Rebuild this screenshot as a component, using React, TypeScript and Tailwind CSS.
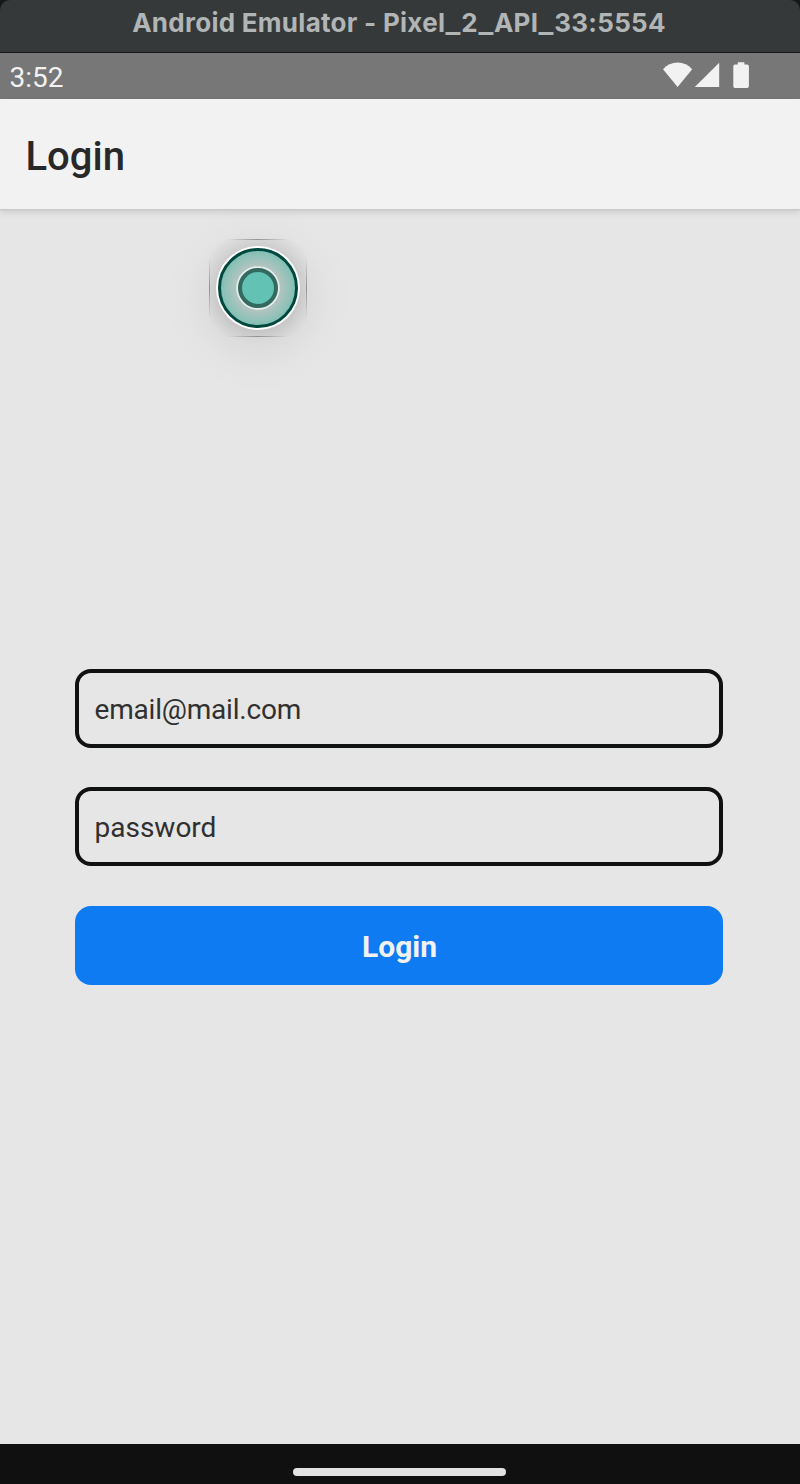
import React, { useState } from "react";

function Underscore() {
  return <span className="inline-block w-[16px] scale-x-[1.2] text-center tracking-normal">_</span>;
}

function TitleBar() {
  return (
    <div className="h-[53px] shrink-0 bg-[#171819]">
      <div className="flex h-[52px] justify-center rounded-t-[10px] bg-[#353939]">
        <h1 className="whitespace-nowrap pt-[6px] pr-[2px] font-['Inter',sans-serif] text-[26px] leading-[34px] font-bold tracking-[0.27px] text-[#b1b5b6]">
          Android Emulator - Pixel<Underscore />2<Underscore />API<Underscore />33:5554
        </h1>
      </div>
    </div>
  );
}

function StatusBar() {
  return (
    <div className="flex h-[46px] shrink-0 items-start justify-between bg-[#777777] pr-[51px] pl-[9.5px] text-[#f2f2f2]">
      <span className="pt-[6.5px] text-[28px] leading-[36px]">3:52</span>
      <svg className="mt-[8px]" width="86" height="28" viewBox="0 0 86 28" fill="currentColor">
        <path d="M0 8.2C4 3.7 9 1.4 14.6 1.4S25.200 3.700 29.200 8.200L14.600 26Z" />
        <path d="M56.200 1.700V26H31.800Z" />
        <path d="M74.800 1.200h6.600v2.300h2.800q1.700 0 1.700 1.700v20q0 1.700-1.700 1.700h-12.200q-1.700 0-1.700-1.700v-20q0-1.700 1.700-1.700h2.800z" />
      </svg>
    </div>
  );
}

function TouchPointer() {
  return (
    <svg className="pointer-events-none absolute top-[-39px] left-[138px]" width="240" height="240" viewBox="0 0 240 240">
      <defs>
        <radialGradient id="shadow" gradientUnits="userSpaceOnUse" cx="120" cy="129" r="96">
          <stop offset="0.3" stopColor="#000" stopOpacity="0.08" />
          <stop offset="0.5" stopColor="#000" stopOpacity="0.04" />
          <stop offset="0.75" stopColor="#000" stopOpacity="0.01" />
          <stop offset="1" stopColor="#000" stopOpacity="0" />
        </radialGradient>
        <radialGradient id="halo" gradientUnits="userSpaceOnUse" cx="120" cy="118" r="60">
          <stop offset="0.68" stopColor="#000" stopOpacity="0.08" />
          <stop offset="1" stopColor="#000" stopOpacity="0" />
        </radialGradient>
        <radialGradient id="ring" gradientUnits="userSpaceOnUse" cx="120" cy="118" r="40">
          <stop offset="0.5" stopColor="#b9c5c1" />
          <stop offset="0.64" stopColor="#a8c3bd" />
          <stop offset="0.82" stopColor="#8fc2b8" />
          <stop offset="1" stopColor="#79bdb1" />
        </radialGradient>
        <linearGradient id="edgeH">
          <stop offset="0.2" stopColor="#777" stopOpacity="0" />
          <stop offset="0.5" stopColor="#777" stopOpacity="0.7" />
          <stop offset="0.8" stopColor="#777" stopOpacity="0" />
        </linearGradient>
        <linearGradient id="edgeV" x1="0" y1="0" x2="0" y2="1">
          <stop offset="0.2" stopColor="#777" stopOpacity="0" />
          <stop offset="0.5" stopColor="#777" stopOpacity="0.7" />
          <stop offset="0.8" stopColor="#777" stopOpacity="0" />
        </linearGradient>
      </defs>
      <circle cx="120" cy="129" r="96" fill="url(#shadow)" />
      <rect x="71" y="69" width="98" height="98" fill="url(#halo)" />
      <rect x="71" y="69" width="98" height="1" fill="url(#edgeH)" />
      <rect x="71" y="166" width="98" height="1" fill="url(#edgeH)" />
      <rect x="71" y="69" width="1" height="98" fill="url(#edgeV)" />
      <rect x="168" y="69" width="1" height="98" fill="url(#edgeV)" />
      <circle cx="120" cy="118" r="42" fill="#fff" />
      <circle cx="120" cy="118" r="38.500" fill="url(#ring)" stroke="#00483e" strokeWidth="3" />
      <circle cx="120" cy="118" r="21.800" fill="#e6eeec" />
      <circle cx="120" cy="118" r="18" fill="#62c2b4" stroke="#34695f" strokeWidth="4" />
    </svg>
  );
}

const inputClass =
  "block h-[79px] w-full rounded-[16px] border-4 border-[#101111] bg-transparent px-[15.5px] pt-[2px] text-[28px] leading-[36px] text-[#303030] outline-none placeholder:text-[#303030] placeholder:opacity-100";

function LoginForm() {
  const [email, setEmail] = useState("");
  const [password, setPassword] = useState("");
  return (
    <form className="ml-[75px] flex w-[648px] flex-col gap-[39px] pt-[460px]" onSubmit={(e) => e.preventDefault()}>
      <input className={`${inputClass} tracking-[-0.2px]`} placeholder="email@mail.com" value={email} onChange={(e) => setEmail(e.target.value)} />
      <input className={inputClass} type="password" placeholder="password" value={password} onChange={(e) => setPassword(e.target.value)} />
      <button className="mt-[0.5px] h-[79.5px] w-full rounded-[16px] bg-[#0f7bf3] pt-[3px] pl-[1px] text-[30px] leading-[36px] font-bold text-[#f2f2f2]">Login</button>
    </form>
  );
}

export default function App() {
  return (
    <div className="flex h-[1484px] w-full flex-col overflow-hidden bg-[#e6e6e6] font-['Roboto',sans-serif]">
      <TitleBar />
      <StatusBar />
      <header className="z-10 flex h-[110px] shrink-0 items-center bg-[#f2f2f2] pt-[6px] pl-[25.5px] shadow-[0_1px_1px_#c9c9c9,0_3px_7px_rgba(0,0,0,0.13)]">
        <h2 className="text-[40px] leading-[48px] font-medium text-[#282828]">Login</h2>
      </header>
      <main className="relative h-[1235px] shrink-0">
        <TouchPointer />
        <LoginForm />
      </main>
      <footer className="flex h-[40px] shrink-0 justify-center bg-[#101010] pt-[24px] pr-[2px]">
        <div className="h-[8px] w-[213px] rounded-full bg-[#e2e2e2]" />
      </footer>
    </div>
  );
}
